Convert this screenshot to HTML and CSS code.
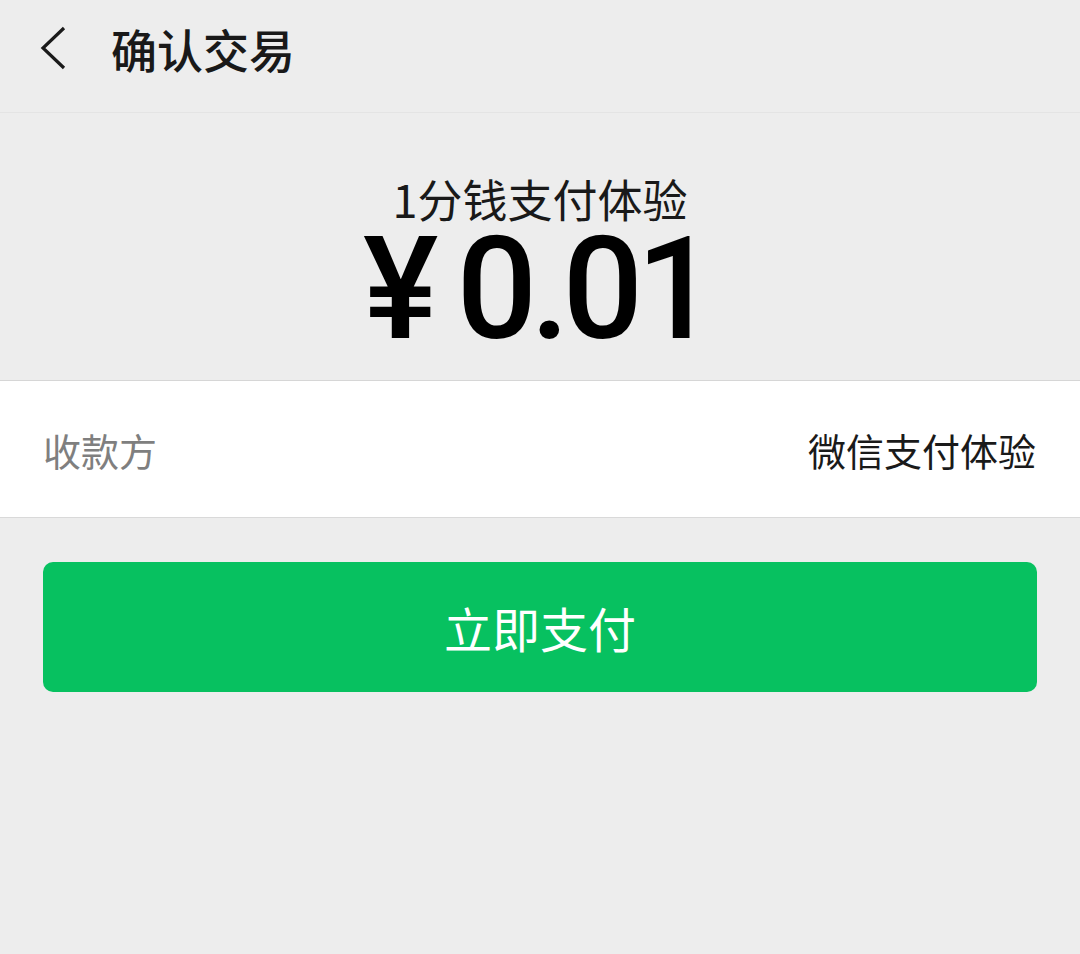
FILE: index.html
```html
<!DOCTYPE html>
<html lang="zh-CN">
<head>
<meta charset="utf-8">
<title>确认交易</title>
<link rel="stylesheet" href="styles.css">
</head>
<body>
<div class="page">
  <header class="topbar">
    <svg class="back" width="30" height="44" viewBox="0 0 30 44" aria-hidden="true">
      <path d="M25 2 L4 22 L25 42" fill="none" stroke="#1a1a1a" stroke-width="3.2" stroke-linecap="butt" stroke-linejoin="miter"/>
    </svg>
    <h1 class="title">确认交易</h1>
  </header>
  <section class="summary">
    <div class="product">1分钱支付体验</div>
    <div class="amount"><span class="currency">¥</span><span class="digits">0.01</span></div>
  </section>
  <section class="info">
    <div class="info-row">
      <span class="label">收款方</span>
      <span class="value">微信支付体验</span>
    </div>
  </section>
  <div class="actions">
    <button class="pay">立即支付</button>
  </div>
</div>
</body>
</html>
```

FILE: styles.css
```css
html, body {
  margin: 0;
  padding: 0;
  background: #ededed;
}
body {
  font-family: "Noto Sans CJK SC", "Noto Sans", sans-serif;
  color: #191919;
}
.page {
  width: 1080px;
  min-height: 954px;
  background: #ededed;
}
.topbar {
  box-sizing: border-box;
  height: 113px;
  border-bottom: 1px solid #e4e4e4;
  display: flex;
  align-items: center;
  padding-left: 39px;
}
.back {
  display: block;
  margin-top: -16px;
}
.title {
  margin: -16px 0 0 42px;
  font-size: 46px;
  font-weight: 500;
  line-height: 60px;
  color: #191919;
}
.summary {
  padding: 61px 0 30px;
  display: flex;
  flex-direction: column;
  align-items: center;
}
.product {
  font-size: 45px;
  line-height: 50px;
  color: #191919;
}
.amount {
  margin-top: 6px;
  display: flex;
  align-items: baseline;
  font-family: Roboto, "Liberation Sans", sans-serif;
  font-weight: 500;
  font-size: 142px;
  line-height: 120px;
  color: #000;
}
.currency {
  margin-right: 18px;
}
.digits {
  letter-spacing: -7px;
  margin-right: 7px;
}
.info {
  background: #fff;
  border-top: 1px solid #d6d6d6;
  border-bottom: 1px solid #d9d9d9;
}
.info-row {
  height: 136px;
  display: flex;
  align-items: center;
  justify-content: space-between;
  padding: 0 44px 0 43px;
  font-size: 38px;
}
.label {
  color: #7f7f7f;
}
.value {
  color: #1a1a1a;
}
.actions {
  padding: 44px 43px 0;
}
.pay {
  display: block;
  width: 100%;
  height: 130px;
  border: none;
  border-radius: 10px;
  background: #07c160;
  color: #fff;
  font-family: "Noto Sans CJK SC", sans-serif;
  font-size: 48px;
}
```
